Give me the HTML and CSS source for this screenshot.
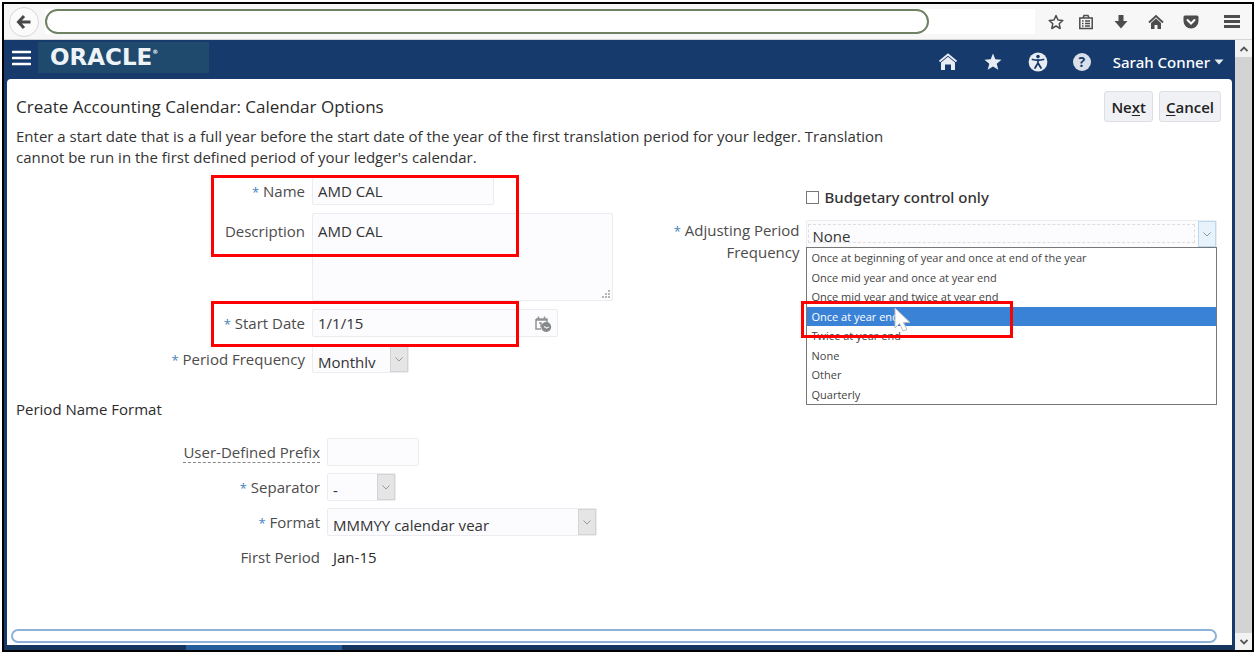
FILE: index.html
```html
<!DOCTYPE html>
<html lang="en">
<head>
<meta charset="utf-8">
<title>Create Accounting Calendar</title>
<meta name="viewport" content="width=device-width, initial-scale=1">
<link rel="stylesheet" href="styles.css">
</head>
<body>
<div class="window">
  <div class="toolbar">
    <button class="back" aria-label="Back"><svg width="16" height="16" viewBox="0 0 16 16"><path d="M8 2 2.500 8 8 14M3 8H14.500" fill="none" stroke="#484848" stroke-width="3"/></svg></button>
    <div class="address"><input class="url" type="text" aria-label="Address"></div>
    <div class="tools">
      <button aria-label="Bookmark"><svg width="16" height="16" viewBox="0 0 16 16"><path d="M8 1.500 10 6l4.800.400-3.600 3.300 1 4.800L8 12l-4.200 2.500 1-4.800L1.200 6.400 6 6Z" fill="none" stroke="#4d4d4d" stroke-width="1.500" stroke-linejoin="round"/></svg></button>
      <button class="divided" aria-label="Bookmarks list"><svg width="16" height="16" viewBox="0 0 16 16"><path d="M1.800 4h12.400v10.500H1.800ZM5 4l1-2.500h4L11 4M4 7h1.500M7 7h5M4 9.500h1.500M7 9.500h5M4 12h1.500M7 12h5" fill="none" stroke="#4d4d4d" stroke-width="1.500"/></svg></button>
      <button aria-label="Downloads"><svg width="16" height="16" viewBox="0 0 16 16"><path d="M5.500 1h5v6H14.500L8 14.500 1.500 7h4Z" fill="#4d4d4d"/></svg></button>
      <button aria-label="Home"><svg width="16" height="16" viewBox="0 0 16 16"><path d="M1 8.500 8 2l7 6.500" fill="none" stroke="#4d4d4d" stroke-width="1.800"/><path d="M3 9 8 4.500 13 9v6H9.500v-4h-3v4H3Z" fill="#4d4d4d"/></svg></button>
      <button aria-label="Pocket"><svg width="16" height="16" viewBox="0 0 16 16"><path d="M2 1.500h12q1.500 0 1.500 1.500v4a7.500 7.500 0 0 1-15 0V3Q.500 1.500 2 1.500Z" fill="#4d4d4d"/><path d="M4.500 6 8 9.500 11.500 6" fill="none" stroke="#fff" stroke-width="2" stroke-linecap="round"/></svg></button>
      <button class="menu" aria-label="Menu"><svg width="16" height="16" viewBox="0 0 16 16"><path d="M0 2.500h16M0 7.500h16M0 12.500h16" stroke="#4d4d4d" stroke-width="2.800"/></svg></button>
    </div>
  </div>
  <div class="viewport">
    <div class="app">
      <header class="header">
        <button class="nav" aria-label="Navigator"><svg width="19" height="16" viewBox="0 0 19 16"><path d="M1 2h17M1 8h17M1 14h17" stroke="#fff" stroke-width="2.600" stroke-linecap="round"/></svg></button>
        <div class="brand">ORACLE<sup>®</sup></div>
        <div class="actions">
          <button aria-label="Home"><svg width="20" height="20" viewBox="0 0 20 20"><path d="M1.500 9.500 10 2.500l8.500 7" fill="none" stroke="#e8edf4" stroke-width="1.800"/><path d="M3 10.500 10 4.800l7 5.700V18h-4v-5.500H7V18H3Z" fill="#e8edf4"/></svg></button>
          <button aria-label="Favorites"><svg width="20" height="20" viewBox="0 0 20 20"><path d="m10 1.500 2.300 5.800 6.200.400-4.800 4 1.600 6.100L10 14.400l-5.300 3.400 1.600-6.100-4.800-4 6.200-.400Z" fill="#e8edf4"/></svg></button>
          <button aria-label="Accessibility"><svg width="20" height="20" viewBox="0 0 20 20"><circle cx="10" cy="10" r="9.400" fill="#e8edf4"/><circle cx="10" cy="4.600" r="1.800" fill="#173a6d"/><path d="M4.500 7.500q5.500 1.500 11 0M10 8v4M10 11l-3 5M10 11l3 5" fill="none" stroke="#173a6d" stroke-width="1.800" stroke-linecap="round"/></svg></button>
          <button class="help" aria-label="Help">?</button>
          <button class="user">Sarah Conner<svg width="10" height="6" viewBox="0 0 10 6"><path d="M.500.500h9L5 5.500Z" fill="#e8edf4"/></svg></button>
        </div>
      </header>
      <main class="panel">
        <div class="titlebar">
          <h1>Create Accounting Calendar: Calendar Options</h1>
          <div class="buttons"><button>Ne<u>x</u>t</button><button><u>C</u>ancel</button></div>
        </div>
        <p class="intro">Enter a start date that is a full year before the start date of the year of the first translation period for your ledger. Translation cannot be run in the first defined period of your ledger's calendar.</p>
        <form class="options">
          <div class="column">
            <div class="row"><label for="name"><b>*</b> Name</label><input class="field medium" id="name" type="text" value="AMD CAL"></div>
            <div class="row tall"><label for="desc">Description</label>
              <div class="memo"><textarea class="field" id="desc">AMD CAL</textarea><svg class="grip" width="8" height="8" viewBox="0 0 8 8"><path d="M6 0h2v2H6ZM3 3h2v2H3ZM6 3h2v2H6ZM0 6h2v2H0ZM3 6h2v2H3ZM6 6h2v2H6Z" fill="#b5b5b5"/></svg></div></div>
            <div class="row"><label for="date"><b>*</b> Start Date</label>
              <div class="datebox"><input id="date" type="text" value="1/1/15"><button type="button" aria-label="Select date"><svg width="18" height="18" viewBox="0 0 18 18"><path d="M2 5h11v4M2 5v10h5M4.500 2.500V6M10.500 2.500V6M2 6h11M5 9h2v4" fill="none" stroke="#929292" stroke-width="1.500"/><circle cx="12.200" cy="13" r="5" fill="#85888c"/><path d="M10 12.500 12.500 14l2.500-1" fill="none" stroke="#eee" stroke-width="1.300"/></svg></button></div></div>
            <div class="row"><label for="freq"><b>*</b> Period Frequency</label>
              <div class="drop small"><select id="freq"><option>Monthly</option></select><span class="arrow"><svg width="8" height="5" viewBox="0 0 8 5"><path d="m.500.500 3.500 3.500L7.500.500" fill="none" stroke="#999"/></svg></span></div></div>
          </div>
          <div class="column right">
            <div class="row check"><span class="spacer"></span><input id="budget" type="checkbox"><label for="budget">Budgetary control only</label></div>
            <div class="row"><label for="adjust"><b>*</b> Adjusting Period Frequency</label>
              <div class="drop wide"><select id="adjust"><option>None</option></select><span class="arrow"><svg width="8" height="5" viewBox="0 0 8 5"><path d="m.500.500 3.500 3.500L7.500.500" fill="none" stroke="#8497a8"/></svg></span>
                <ul class="list" role="listbox" aria-label="Adjusting Period Frequency">
                  <li role="option">Once at beginning of year and once at end of the year</li>
                  <li role="option">Once mid year and once at year end</li>
                  <li role="option">Once mid year and twice at year end</li>
                  <li role="option" class="active" aria-selected="true">Once at year end
                    <svg class="pointer" width="18" height="26" viewBox="0 0 18 26"><path d="M2 1v20l4.500-4.500L10 24l4-1.500-3.500-7H17Z" fill="#fff" stroke="#b9bdc4"/></svg></li>
                  <li role="option">Twice at year end</li>
                  <li role="option">None</li>
                  <li role="option">Other</li>
                  <li role="option">Quarterly</li>
                </ul></div></div>
          </div>
        </form>
        <h2>Period Name Format</h2>
        <form class="format">
          <div class="row"><label for="prefix"><span class="hint">User-Defined Prefix</span></label><input class="field short" id="prefix" type="text"></div>
          <div class="row"><label for="sep"><b>*</b> Separator</label>
            <div class="drop tiny"><select id="sep"><option>-</option></select><span class="arrow"><svg width="8" height="5" viewBox="0 0 8 5"><path d="m.500.500 3.500 3.500L7.500.500" fill="none" stroke="#999"/></svg></span></div></div>
          <div class="row"><label for="fmt"><b>*</b> Format</label>
            <div class="drop large"><select id="fmt"><option>MMMYY calendar year</option></select><span class="arrow"><svg width="8" height="5" viewBox="0 0 8 5"><path d="m.500.500 3.500 3.500L7.500.500" fill="none" stroke="#999"/></svg></span></div></div>
          <div class="row"><label for="first">First Period</label><output id="first">Jan-15</output></div>
        </form>
        <div class="track"></div>
        <div class="mark mark-name"></div>
        <div class="mark mark-date"></div>
        <div class="mark mark-option"></div>
      </main>
      <div class="strip"><span></span></div>
    </div>
    <div class="scrollbar">
      <button aria-label="Scroll up"><svg width="8" height="6" viewBox="0 0 8 6"><path d="M.500 5 4 1.500 7.500 5" fill="none" stroke="#555" stroke-width="1.800"/></svg></button>
      <button aria-label="Scroll down"><svg width="8" height="6" viewBox="0 0 8 6"><path d="M.500 1 4 4.500 7.500 1" fill="none" stroke="#555" stroke-width="1.800"/></svg></button>
    </div>
  </div>
</div>
</body>
</html>
```
FILE: styles.css
```css
* { box-sizing: border-box; }
body { margin: 0; padding: 2px 2px 4px 2px; min-height: 100vh; display: flex; background: #fff; color: #2b2b2b; font: 500 15px/20px "Open Sans", "Noto Sans", sans-serif; }
button, input, select, textarea { font: inherit; color: inherit; margin: 0; }
button { padding: 0; border: 0; background: none; display: flex; align-items: center; justify-content: center; }
svg { display: block; flex: none; }
.window { flex: 1; min-width: 0; display: flex; flex-direction: column; border: 2px solid #000; }
.toolbar { display: flex; align-items: center; height: 36px; padding: 0 12px 0 5px; background: #f7f7f7; border-bottom: 1px solid #d5d5d5; }
.back { width: 30px; height: 30px; border: 1px solid #d8d8d8; border-radius: 50%; background: #fbfbfb; }
.address { flex: 1; display: flex; margin-left: 6px; padding-right: 106px; background: #fff; }
.url { flex: 1; min-width: 0; height: 25px; border: 2px solid #6f8163; border-radius: 13px; background: #fff; outline: 0; }
.tools { display: flex; align-items: center; gap: 19px; margin-left: 13px; }
.tools .divided { margin-left: -5px; }
.tools .menu { padding-left: 6px; }
.viewport { flex: 1; display: flex; }
.app { flex: 1; min-width: 0; display: flex; flex-direction: column; padding: 0 3px; background: #173a6d; }
.header { display: flex; height: 39px; padding: 0 8px 0 4px; }
.nav { width: 20px; height: 36px; }
.brand { width: 171px; height: 31px; margin: 2px 0 0 7px; padding-left: 12px; background: #1f496d; color: #eef3f8; font: 700 23px/31px "DejaVu Sans", sans-serif; white-space: nowrap; }
.brand sup { font-size: 6px; line-height: 6px; vertical-align: 11px; }
.actions { display: flex; align-items: center; gap: 25px; margin-left: auto; padding-top: 5px; color: #fff; }
.help { width: 18px; height: 18px; border-radius: 50%; background: #d9e0ea; color: #173a6d; font-weight: 700; font-size: 14px; line-height: 18px; }
.user { gap: 4px; margin-left: -3px; font-family: "Noto Sans", sans-serif; }
.panel { position: relative; flex: 1; display: flex; flex-direction: column; padding: 12px 15px 2px 9px; border-radius: 4px 4px 0 0; background: #fff; }
.titlebar { display: flex; justify-content: space-between; align-items: flex-start; height: 35px; }
h1 { margin: 6px 0 0; font-size: 17px; line-height: 20px; font-weight: 500; }
.buttons { display: flex; gap: 6px; margin-right: -4px; }
.buttons button { display: block; height: 31px; padding: 0 6px; border: 1px solid #dcdfe3; border-radius: 3px; background: #eff1f4; color: #222; font-weight: 600; }
.buttons u { text-underline-offset: 2px; }
.intro { margin: 0; max-width: 890px; line-height: 21px; color: #333; }
.options { display: grid; grid-template-columns: 1fr 1fr; margin-top: 9px; }
.column, .format { display: flex; flex-direction: column; gap: 8px; }
.format { gap: 7px; }
.row { display: flex; gap: 7px; }
.row > label { width: 289px; padding-top: 4px; text-align: right; color: #4c4c4c; }
.tall > label { padding-top: 8px; }
.row b { color: #3f82bd; font-weight: 400; font-size: 13px; }
.format .row > label { width: 304px; }
.right { gap: 13px; padding-top: 10px; }
.right .row { gap: 6px; }
.right .row > label, .spacer { width: 183px; padding-top: 0; line-height: 21px; }
.right .check { align-items: center; height: 20px; }
.right .check > label { width: auto; color: #333; font-family: "Noto Sans", sans-serif; }
.check input { appearance: none; width: 13px; height: 13px; border: 1px solid #777; background: #fff; }
.field, .datebox, .drop { height: 28px; border: 1px solid #ececf0; border-radius: 2px; background: #fcfcfe; color: #333; }
.field { padding: 0 5px; outline: 0; }
.medium { width: 182px; }
.short { width: 92px; }
.memo { position: relative; width: 301px; height: 88px; }
.memo textarea { display: block; width: 100%; height: 100%; padding-top: 7px; resize: none; }
.grip { position: absolute; right: 3px; bottom: 3px; }
.datebox { display: flex; width: 246px; padding: 0 5px; }
.datebox input { flex: 1; min-width: 0; padding: 0; border: 0; background: none; outline: 0; }
.drop { position: relative; display: flex; }
.drop select { appearance: none; flex: 1; min-width: 0; height: 26px; padding: 6px 5px 4px; border: 0; background: none; outline: 0; overflow: hidden; }
.arrow { display: flex; align-items: center; justify-content: center; width: 18px; border: 1px solid #d4d4d4; background: #e5e5e5; }
.small { width: 97px; }
.tiny { width: 69px; }
.large { width: 270px; }
.wide { flex: 1; }
.drop.wide select { height: 19px; margin: 3px 3px 0 1px; padding: 1px 4px 0; border: 1px dashed #ddd; }
.wide .arrow { border-color: #bdd9ee; background: #e8f2fb; }
.list { position: absolute; z-index: 1; top: 26px; left: -1px; right: -1px; margin: 0; padding: 0; border: 1px solid #777; background: #fff; list-style: none; font-size: 11px; font-weight: 400; color: #444; }
.list li { height: 20px; padding-left: 5px; line-height: 20px; }
.list li:nth-child(even) { height: 19px; }
.list .active { position: relative; background: #3a82d6; color: #fff; }
.pointer { position: absolute; left: 86px; top: 0; z-index: 3; }
h2 { margin: 26px 0 19px; font-size: 15px; line-height: 20px; font-weight: 500; }
.hint { border-bottom: 1px dashed #888; }
output { padding: 4px 6px; }
.track { height: 14px; margin: auto 0 0 -5px; border: 2px solid #8db1d8; border-radius: 7px; }
.mark { position: absolute; z-index: 2; border: 3px solid #f00; pointer-events: none; }
.mark-name { left: 204px; top: 96px; width: 308px; height: 82px; }
.mark-date { left: 204px; top: 222px; width: 308px; height: 46px; }
.mark-option { left: 794px; top: 222px; width: 212px; height: 37px; }
.strip { height: 5px; margin: 0 -3px; background: #16365f; }
.strip span { display: block; width: 156px; height: 5px; margin-left: 182px; background: #265e9c; }
.scrollbar { display: flex; flex-direction: column; justify-content: space-between; width: 17px; background: #d3d3d3; }
.scrollbar button { height: 17px; background: #f2f2f2; }
```
